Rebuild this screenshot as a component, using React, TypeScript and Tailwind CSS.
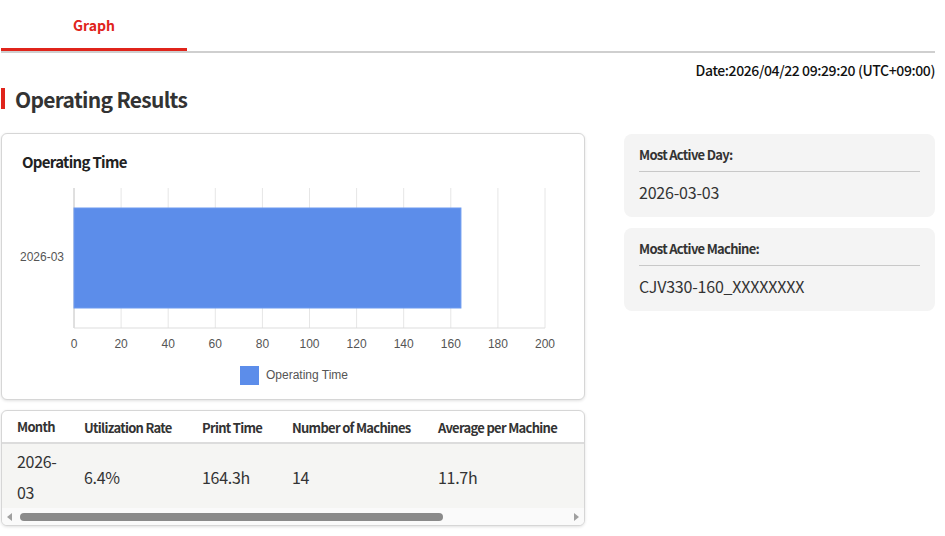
import React from "react";

const font = { fontFamily: '"Noto Sans CJK JP", "Noto Sans", sans-serif' };

function Chart() {
  const x0 = 72;
  const x1 = 543;
  const step = (x1 - x0) / 10;
  const ticks = [0, 20, 40, 60, 80, 100, 120, 140, 160, 180, 200];
  const barW = (164.3 / 200) * (x1 - x0);
  return (
    <svg width="582" height="215" className="block" style={{ fontFamily: '"Liberation Sans", Arial, sans-serif' }}>
      {ticks.map((t, i) => (
        <line key={t} x1={x0 + i * step} x2={x0 + i * step} y1={8} y2={148} stroke="#e6e6e6" strokeWidth={1} />
      ))}
      <line x1={x0} x2={x0} y1={8} y2={148} stroke="#cccccc" strokeWidth={1} />
      <line x1={x0} x2={x1} y1={148} y2={148} stroke="#dddddd" strokeWidth={1} />
      <rect x={x0} y={28} width={barW} height={100} fill="#5c8dea" stroke="#6d9af0" strokeWidth={1} />
      <text x={62} y={81} textAnchor="end" fontSize="12" fill="#555">2026-03</text>
      {ticks.map((t, i) => (
        <text key={t} x={x0 + i * step} y={168} textAnchor="middle" fontSize="12" fill="#555">
          {t}
        </text>
      ))}
      <rect x={238} y={186} width={19} height={19} fill="#5c8dea" />
      <text x={264} y={199} fontSize="12" fill="#555">Operating Time</text>
    </svg>
  );
}

function InfoCard({ label, value }: { label: string; value: string }) {
  return (
    <div className="rounded-lg bg-[#f4f4f4] px-[15px] pt-[12px] pb-[13px]">
      <div className="text-[13px] leading-[18px] font-bold tracking-[-0.7px] text-[#333]">{label}</div>
      <div className="mt-[7px] h-px bg-[#c8c8c8]" />
      <div className="mt-[8px] text-[16px] leading-[24px] tracking-[-0.2px] text-[#333]">{value}</div>
    </div>
  );
}

export default function App() {
  return (
    <div className="w-[945px] h-[536px] bg-white overflow-hidden pl-[1px] pr-[10px]" style={font}>
      {/* Tabs */}
      <div className="flex h-[53px] border-b-2 border-[#cfcfcf]">
        <div className="w-[186px] h-[51px] border-b-[3px] border-[#e0241b] flex items-start justify-center pt-[15px]">
          <span className="text-[14px] leading-[20px] font-bold text-[#e0241b]">Graph</span>
        </div>
      </div>
      {/* Date */}
      <div className="flex justify-end mt-[7px]">
        <span className="text-[14px] leading-[20px] font-medium tracking-[-0.4px] text-[#111]">Date:2026/04/22 09:29:20 (UTC+09:00)</span>
      </div>
      {/* Heading */}
      <div className="flex items-center mt-[8px] h-[21px]">
        <div className="w-[4px] h-[21px] bg-[#e0241b]" />
        <h1 className="ml-[10px] text-[21px] leading-[30px] font-bold tracking-[-0.7px] text-[#333]">Operating Results</h1>
      </div>
      <div className="flex mt-[24px] gap-[39px]">
        {/* Left */}
        <div className="w-[584px] flex flex-col gap-[10px]">
          <div className="h-[267px] rounded-md border border-[#d6d6d6] bg-white shadow-[0_1px_3px_rgba(0,0,0,0.12)]">
            <div className="pl-[20px] pt-[18px] text-[15px] leading-[20px] font-bold tracking-[-0.7px] text-[#222]">Operating Time</div>
            <div className="mt-[8px]">
              <Chart />
            </div>
          </div>
          <div className="h-[116px] rounded-md border border-[#d6d6d6] bg-white shadow-[0_1px_3px_rgba(0,0,0,0.12)] overflow-hidden flex flex-col">
            <div className="flex h-[33px] items-center border-b-2 border-[#dcdcdc] text-[13px] leading-[18px] font-bold tracking-[-0.7px] text-[#333] whitespace-nowrap">
              <div className="w-[67px] pl-[15px]">Month</div>
              <div className="w-[118px] pl-[15px] pt-[3px]">Utilization Rate</div>
              <div className="w-[90px] pl-[15px] pt-[3px]">Print Time</div>
              <div className="w-[146px] pl-[15px] pt-[3px]">Number of Machines</div>
              <div className="w-[160px] pl-[15px] pt-[3px]">Average per Machine</div>
            </div>
            <div className="flex h-[64px] items-center bg-[#f5f5f3] text-[16px] tracking-[-0.3px] text-[#333]">
              <div className="w-[67px] pl-[15px] pr-[6px] leading-[31px] pt-[1px]">2026-03</div>
              <div className="w-[118px] pl-[15px] leading-[24px] pt-[1px]">6.4%</div>
              <div className="w-[90px] pl-[15px] leading-[24px] pt-[1px]">164.3h</div>
              <div className="w-[146px] pl-[15px] leading-[24px] pt-[1px]">14</div>
              <div className="w-[160px] pl-[15px] leading-[24px] pt-[1px]">11.7h</div>
            </div>
            <div className="flex-1 bg-[#fafafa] flex items-center px-[3px]">
              <div className="w-0 h-0 border-y-[4px] border-y-transparent border-r-[5px] border-r-[#a0a0a0] ml-[2px]" />
              <div className="ml-[8px] w-[423px] h-[8px] rounded-full bg-[#8a8a8a]" />
              <div className="flex-1" />
              <div className="w-0 h-0 border-y-[4px] border-y-transparent border-l-[5px] border-l-[#a0a0a0] mr-[2px]" />
            </div>
          </div>
        </div>
        {/* Right */}
        <div className="flex-1 flex flex-col gap-[11px] pt-[1px]">
          <InfoCard label="Most Active Day:" value="2026-03-03" />
          <InfoCard label="Most Active Machine:" value="CJV330-160_XXXXXXXX" />
        </div>
      </div>
    </div>
  );
}
